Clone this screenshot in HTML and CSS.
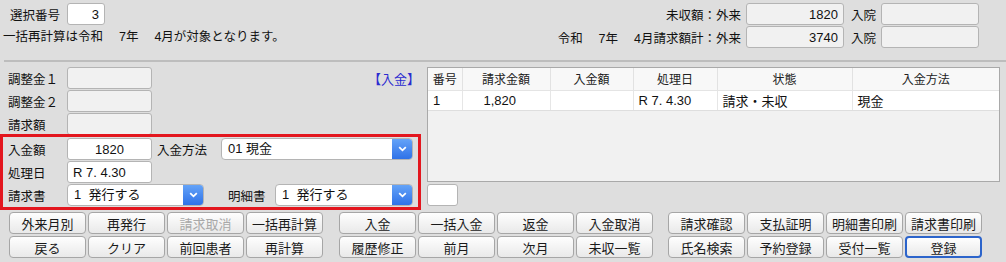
FILE: index.html
```html
<!DOCTYPE html>
<html lang="ja">
<head>
    <meta charset="UTF-8">
    <title>入金処理</title>
    <link rel="stylesheet" href="styles.css">
</head>
<body>

    <div class="top">
        <div class="top-left">
            <div class="row">
                <span class="lbl">選択番号</span>
                <input class="inp num sel-no" type="text" value="3">
            </div>
            <div class="msg">一括再計算は令和　 7年　 4月が対象となります。</div>
        </div>
        <div class="top-right">
            <span class="lbl-r">未収額：外来</span>
            <input class="inp ro num" type="text" value="1820" readonly>
            <span class="lbl-in">入院</span>
            <input class="inp ro" type="text" readonly>

            <span class="lbl-r">令和　 7年　 4月請求額計：外来</span>
            <input class="inp ro num" type="text" value="3740" readonly>
            <span class="lbl-in">入院</span>
            <input class="inp ro" type="text" readonly>
        </div>
    </div>

    <div class="divider"></div>

    <div class="main">
        <div class="left">
            <div class="row">
                <span class="lbl">調整金１</span>
                <input class="inp ro w85" type="text" readonly>
                <span class="section-tag">【入金】</span>
            </div>
            <div class="row">
                <span class="lbl">調整金２</span>
                <input class="inp ro w85" type="text" readonly>
            </div>
            <div class="row">
                <span class="lbl">請求額</span>
                <input class="inp ro w85" type="text" readonly>
            </div>

            <!-- 入金入力 -->
            <div class="entry">
                <div class="row">
                    <span class="lbl">入金額</span>
                    <input class="inp w85 center" type="text" value="1820">
                    <span class="lbl lbl-method">入金方法</span>
                    <div class="select w192">
                        <span class="select-text">01 現金</span>
                        <span class="arrow"><svg width="9" height="6" viewBox="0 0 9 6"><path d="M1.2 1.2 L4.5 4.3 L7.8 1.2" fill="none" stroke="#fff" stroke-width="1.8"/></svg></span>
                    </div>
                </div>
                <div class="row">
                    <span class="lbl">処理日</span>
                    <input class="inp w85" type="text" value="R 7. 4.30">
                </div>
                <div class="row">
                    <span class="lbl">請求書</span>
                    <div class="select w137">
                        <span class="select-text">1&nbsp;&nbsp;発行する</span>
                        <span class="arrow"><svg width="9" height="6" viewBox="0 0 9 6"><path d="M1.2 1.2 L4.5 4.3 L7.8 1.2" fill="none" stroke="#fff" stroke-width="1.8"/></svg></span>
                    </div>
                    <span class="lbl lbl-detail">明細書</span>
                    <div class="select w138">
                        <span class="select-text">1&nbsp;&nbsp;発行する</span>
                        <span class="arrow"><svg width="9" height="6" viewBox="0 0 9 6"><path d="M1.2 1.2 L4.5 4.3 L7.8 1.2" fill="none" stroke="#fff" stroke-width="1.8"/></svg></span>
                    </div>
                </div>
            </div>
        </div>

        <div class="right">
            <div class="table-box">
                <table class="list">
                    <thead>
                        <tr>
                            <th class="c-no">番号</th>
                            <th class="c-bill">請求金額</th>
                            <th class="c-paid">入金額</th>
                            <th class="c-date">処理日</th>
                            <th class="c-state">状態</th>
                            <th>入金方法</th>
                        </tr>
                    </thead>
                    <tbody>
                        <tr>
                            <td>1</td>
                            <td class="amount">1,820</td>
                            <td></td>
                            <td>R 7. 4.30</td>
                            <td>請求・未収</td>
                            <td>現金</td>
                        </tr>
                    </tbody>
                </table>
            </div>
            <input class="inp small-box" type="text">
        </div>
    </div>

    <div class="buttons">
        <div class="btn-group">
            <button>外来月別</button>
            <button>再発行</button>
            <button disabled>請求取消</button>
            <button>一括再計算</button>
            <button>戻る</button>
            <button>クリア</button>
            <button>前回患者</button>
            <button>再計算</button>
        </div>
        <div class="btn-group">
            <button>入金</button>
            <button>一括入金</button>
            <button>返金</button>
            <button>入金取消</button>
            <button>履歴修正</button>
            <button>前月</button>
            <button>次月</button>
            <button>未収一覧</button>
        </div>
        <div class="btn-group last">
            <button>請求確認</button>
            <button>支払証明</button>
            <button>明細書印刷</button>
            <button>請求書印刷</button>
            <button>氏名検索</button>
            <button>予約登録</button>
            <button>受付一覧</button>
            <button class="default">登録</button>
        </div>
    </div>

</body>
</html>
```

FILE: styles.css
```css
/* Global */
* {
    box-sizing: border-box;
}

body {
    margin: 0;
    width: 1006px;
    height: 262px;
    overflow: hidden;
    background-color: #dedede;
    font-family: "Liberation Sans", "Noto Sans CJK JP", sans-serif;
    font-size: 12.5px;
    color: #111;
}

/* Inputs */
.inp {
    height: 22px;
    margin: 0;
    padding: 0 5px;
    border: 1px solid #b4b4b4;
    border-radius: 3px;
    background: #fff;
    font-family: inherit;
    font-size: 13px;
    color: #111;
    outline: none;
}

.inp.ro {
    background: #f1f1f1;
}

.num {
    text-align: right;
}

.center {
    text-align: center;
}

.w85 {
    width: 85px;
}

/* Header area */
.top {
    display: flex;
    justify-content: space-between;
    align-items: flex-start;
    height: 60px;
    padding-top: 3px;
}

.top-left {
    display: flex;
    flex-direction: column;
    gap: 1px;
}

.top-left .row {
    display: flex;
    align-items: center;
    height: 22px;
    padding-left: 10px;
}

.top-left .lbl {
    width: 57px;
}

.sel-no {
    width: 38px;
}

.msg {
    height: 22px;
    line-height: 22px;
    padding-left: 3px;
}

.top-right {
    display: grid;
    grid-template-columns: auto 98px auto 98px;
    grid-auto-rows: 22px;
    align-content: start;
    column-gap: 5px;
    row-gap: 1px;
    align-items: center;
    padding-right: 27px;
}

.top-right .inp {
    width: 98px;
}

.lbl-r {
    text-align: right;
}

.lbl-in {
    padding-left: 2px;
}

.divider {
    height: 2px;
    margin-left: 4px;
    background: #bdbdbd;
}

/* Main area */
.main {
    display: flex;
    gap: 6px;
    height: 148px;
}

.left {
    width: 421px;
    padding-top: 5px;
}

.left .row {
    display: flex;
    align-items: center;
    height: 22px;
    margin-bottom: 1px;
    padding-left: 8px;
}

.left .lbl {
    width: 59px;
    flex-shrink: 0;
}

.section-tag {
    margin-left: auto;
    padding-right: 1px;
    color: #2b2bd0;
    font-size: 13px;
}

/* Highlighted entry block */
.entry {
    position: relative;
    margin-top: -2px;
    padding: 1px 0 1px 5px;
    border: 3px solid #e3161e;
}

.entry .row {
    padding-left: 0;
}

.entry .row:last-child {
    margin-bottom: 0;
}

.entry .lbl-method {
    width: 64px;
    margin-left: 5px;
}

.entry .lbl-detail {
    width: 47px;
    margin-left: 24px;
}

/* Select box */
.select {
    display: flex;
    height: 22px;
    border: 1px solid #b4b4b4;
    border-radius: 4px;
    background: #fff;
    overflow: hidden;
}

.select-text {
    flex: 1;
    padding-left: 6px;
    line-height: 20px;
    font-size: 13px;
    color: #111;
}

.select .arrow {
    display: flex;
    align-items: center;
    justify-content: center;
    width: 20px;
    background: linear-gradient(#64a3f8, #2f72e8);
}

.w192 {
    width: 192px;
}

.w137 {
    width: 137px;
}

.w138 {
    width: 138px;
}

/* Right list */
.right {
    width: 573px;
    padding-top: 5px;
}

.table-box {
    height: 115px;
    border: 1px solid #a9a9a9;
    background: #f1f1f1;
}

.list {
    width: 100%;
    border-collapse: collapse;
    table-layout: fixed;
}

.list th {
    height: 22px;
    padding: 0;
    background: #f8f8f8;
    border-right: 1px solid #e2e2e2;
    border-bottom: 1px solid #e4e4e4;
    font-weight: normal;
    font-size: 12px;
    color: #222;
    text-align: center;
}

.list td {
    height: 18px;
    padding: 0 0 0 5px;
    background: #fff;
    border-right: 1px solid #e6e6e6;
    border-bottom: 1px solid #dedede;
    font-size: 13px;
    color: #111;
    white-space: nowrap;
}

.list th:last-child,
.list td:last-child {
    border-right: none;
}

.list td.amount {
    padding-left: 21px;
}

.c-no {
    width: 34px;
}

.c-bill {
    width: 88px;
}

.c-paid {
    width: 83px;
}

.c-date {
    width: 84px;
}

.c-state {
    width: 135px;
}

.small-box {
    display: block;
    width: 31px;
    margin-top: 2px;
}

/* Buttons */
.buttons {
    display: flex;
    margin-top: 2px;
    padding-left: 9px;
}

.btn-group {
    display: grid;
    grid-template-columns: repeat(4, 77px);
    grid-auto-rows: 22px;
    gap: 2px;
}

.btn-group + .btn-group {
    margin-left: 16px;
}

.btn-group.last {
    margin-left: 15px;
}

button {
    margin: 0;
    padding: 0;
    border: 1px solid #a6a6a6;
    border-radius: 4px;
    background: linear-gradient(#fefefe, #e9e9e9);
    font-family: inherit;
    font-size: 13px;
    color: #1a1a1a;
    cursor: pointer;
}

button:disabled {
    color: #a9a9a9;
    cursor: default;
}

button.default {
    border: 2px solid #2c64cb;
}
```
